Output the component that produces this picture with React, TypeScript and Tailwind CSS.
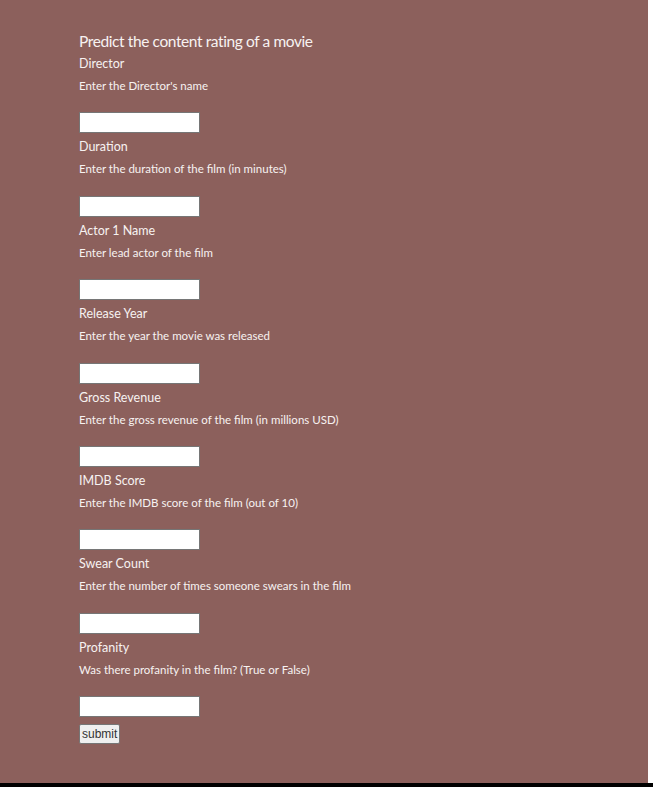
const fields: { label: string; hint: string }[] = [
  { label: 'Director', hint: "Enter the Director's name" },
  { label: 'Duration', hint: 'Enter the duration of the film (in minutes)' },
  { label: 'Actor 1 Name', hint: 'Enter lead actor of the film' },
  { label: 'Release Year', hint: 'Enter the year the movie was released' },
  { label: 'Gross Revenue', hint: 'Enter the gross revenue of the film (in millions USD)' },
  { label: 'IMDB Score', hint: 'Enter the IMDB score of the film (out of 10)' },
  { label: 'Swear Count', hint: 'Enter the number of times someone swears in the film' },
  { label: 'Profanity', hint: 'Was there profanity in the film? (True or False)' },
];

export default function App() {
  return (
    <div className="flex flex-col w-[653px] h-[787px] bg-white">
      <div className="flex flex-1">
        <div className="w-[648px] h-[783px] bg-[#8c605c] pl-[79px] pt-[29px] text-[#f7f2f1] font-['Lato','Open_Sans',sans-serif]">
          <h1 className="text-[15.5px] leading-[24px] tracking-[-0.4px] font-normal">Predict the content rating of a movie</h1>
          <form className="flex flex-col" onSubmit={(e) => e.preventDefault()}>
            {fields.map(({ label, hint }, i) => (
              <div key={label} className={i === 0 ? 'flex flex-col' : 'flex flex-col mt-[3px]'}>
                <label className="text-[12.5px] leading-[22px]">{label}</label>
                <p className="text-[11.5px] leading-[22px]">{hint}</p>
                <input
                  type="text"
                  className="mt-[15.4px] w-[121px] h-[21px] bg-white border border-[#767676] outline-none"
                />
              </div>
            ))}
            <button
              type="submit"
              className="mt-[7px] self-start h-[20px] px-[2px] bg-[#efefef] border border-[#767676] rounded-[2px] text-[12px] leading-none text-[#333] font-['Liberation_Sans',Arial,sans-serif]"
            >
              submit
            </button>
          </form>
        </div>
      </div>
      <div className="h-[4px] bg-black" />
    </div>
  );
}
